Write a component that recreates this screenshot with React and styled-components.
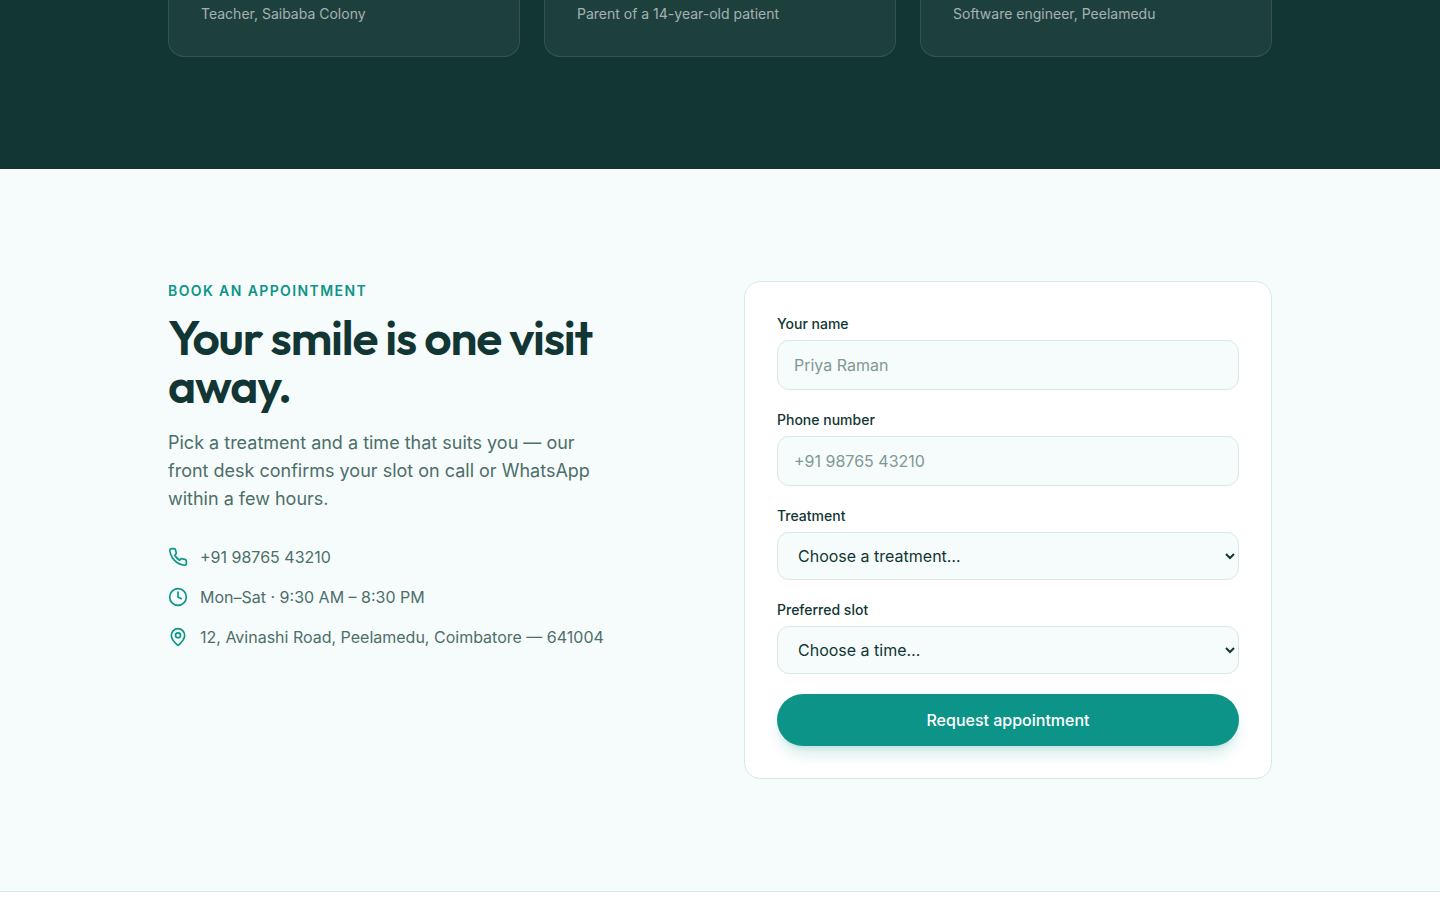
import React from "react";
import styled, { createGlobalStyle } from "styled-components";
import { Clock, MapPin } from "lucide-react";

const ink = "#113633";
const muted = "#4e6e69";
const teal = "#0d9488";
const mist = "#f5fcfb";
const line = "#d6eae6";

const GlobalStyle = createGlobalStyle`
  *, *::before, *::after { box-sizing: border-box; }
  body {
    margin: 0;
    background: #fff;
    color: ${ink};
    font-family: Inter, "Liberation Sans", sans-serif;
    font-size: 16px;
    line-height: 24px;
    -webkit-font-smoothing: antialiased;
  }
  h2, p, ul { margin: 0; padding: 0; }
`;

const Container = styled.div`
  max-width: 1152px;
  margin: 0 auto;
  padding: 0 24px;
`;

const Testimonials = styled.section`
  background: ${ink};
  padding-bottom: 112px;
`;

const CardGrid = styled.div`
  display: grid;
  grid-template-columns: repeat(3, 1fr);
  gap: 24px;
`;

const TestimonialCard = styled.article`
  padding: 4px 32px 32px;
  border: 1px solid rgba(255, 255, 255, 0.1);
  border-top: 0;
  border-radius: 0 0 16px 16px;
  background: rgba(255, 255, 255, 0.05);
`;

const Role = styled.p`
  font-size: 14px;
  line-height: 20px;
  color: rgba(255, 255, 255, 0.6);
`;

const Booking = styled.section`
  background: ${mist};
  padding: 112px 0;
`;

const BookingGrid = styled(Container)`
  display: grid;
  grid-template-columns: 1fr 1fr;
  gap: 48px;
`;

const Eyebrow = styled.p`
  font-size: 14px;
  line-height: 20px;
  font-weight: 600;
  letter-spacing: 0.1em;
  text-transform: uppercase;
  color: ${teal};
`;

const Intro = styled.div`
  max-width: 448px;
`;

const Title = styled.h2`
  margin-top: 12px;
  font-family: Outfit, Lato, sans-serif;
  font-size: 48px;
  line-height: 48px;
  font-weight: 600;
  letter-spacing: -0.025em;
`;

const Lead = styled.p`
  margin-top: 20px;
  font-size: 18px;
  line-height: 28px;
  color: ${muted};
`;

const ContactList = styled.ul`
  display: flex;
  flex-direction: column;
  gap: 16px;
  margin-top: 32px;
  list-style: none;
  color: ${muted};
`;

const ContactItem = styled.li`
  display: flex;
  align-items: center;
  gap: 12px;

  svg {
    flex: none;
    color: ${teal};
  }
`;

const ContactLink = styled.a`
  color: inherit;
  text-decoration: none;
`;

const Form = styled.form`
  display: flex;
  flex-direction: column;
  gap: 20px;
  padding: 32px;
  border: 1px solid ${line};
  border-radius: 16px;
  background: #fff;
`;

const Field = styled.div`
  display: flex;
  flex-direction: column;
  gap: 6px;
`;

const Label = styled.label`
  font-size: 14px;
  line-height: 20px;
  font-weight: 500;
`;

const Input = styled.input`
  width: 100%;
  height: 50px;
  padding: 12px 16px;
  border: 1px solid ${line};
  border-radius: 12px;
  background: ${mist};
  color: ${ink};
  font: inherit;

  &::placeholder {
    color: ${muted};
    opacity: 0.7;
  }
`;

const Select = styled.select`
  width: 100%;
  height: 48px;
  padding: 12px 16px;
  border: 1px solid ${line};
  border-radius: 12px;
  background: ${mist};
  color: ${ink};
  font: inherit;
`;

const SubmitButton = styled.button`
  height: 52px;
  padding: 0 28px;
  border: 0;
  border-radius: 26px;
  background: ${teal};
  box-shadow: 0 10px 15px -3px rgba(13, 148, 136, 0.2), 0 4px 6px -4px rgba(13, 148, 136, 0.2);
  color: #fff;
  font: inherit;
  font-weight: 500;
  cursor: pointer;
`;

const Footer = styled.footer`
  padding: 4px 0;
  border-top: 1px solid ${line};
  background: #fff;
`;

const roles = [
  "Teacher, Saibaba Colony",
  "Parent of a 14-year-old patient",
  "Software engineer, Peelamedu",
];

function PhoneIcon() {
  return (
    <svg
      width="20"
      height="20"
      viewBox="0 0 24 24"
      fill="none"
      stroke="currentColor"
      strokeWidth="2"
      strokeLinecap="round"
      strokeLinejoin="round"
      aria-hidden="true"
    >
      <path d="M22 16.92v3a2 2 0 0 1-2.18 2 19.79 19.79 0 0 1-8.63-3.07 19.5 19.5 0 0 1-6-6 19.79 19.79 0 0 1-3.07-8.67A2 2 0 0 1 4.11 2h3a2 2 0 0 1 2 1.72 12.84 12.84 0 0 0 .7 2.81 2 2 0 0 1-.45 2.11L8.09 9.91a16 16 0 0 0 6 6l1.27-1.27a2 2 0 0 1 2.11-.45 12.84 12.84 0 0 0 2.81.7A2 2 0 0 1 22 16.92z" />
    </svg>
  );
}

export default function App() {
  return (
    <>
      <GlobalStyle />
      <Testimonials>
        <Container>
          <CardGrid>
            {roles.map((role) => (
              <TestimonialCard key={role}>
                <Role>{role}</Role>
              </TestimonialCard>
            ))}
          </CardGrid>
        </Container>
      </Testimonials>
      <Booking>
        <BookingGrid>
          <Intro>
            <Eyebrow>Book an appointment</Eyebrow>
            <Title>Your smile is one visit away.</Title>
            <Lead>
              Pick a treatment and a time that suits you — our front desk confirms your slot on
              call or WhatsApp within a few hours.
            </Lead>
            <ContactList>
              <ContactItem>
                <PhoneIcon />
                <ContactLink href="tel:+919876543210">+91 98765 43210</ContactLink>
              </ContactItem>
              <ContactItem>
                <Clock size={20} aria-hidden="true" />
                <span>Mon–Sat · 9:30 AM – 8:30 PM</span>
              </ContactItem>
              <ContactItem>
                <MapPin size={20} aria-hidden="true" />
                <span>12, Avinashi Road, Peelamedu, Coimbatore — 641004</span>
              </ContactItem>
            </ContactList>
          </Intro>
          <Form onSubmit={(event) => event.preventDefault()}>
            <Field>
              <Label htmlFor="name">Your name</Label>
              <Input id="name" type="text" placeholder="Priya Raman" />
            </Field>
            <Field>
              <Label htmlFor="phone">Phone number</Label>
              <Input id="phone" type="tel" placeholder="+91 98765 43210" />
            </Field>
            <Field>
              <Label htmlFor="treatment">Treatment</Label>
              <Select id="treatment" defaultValue="">
                <option value="">Choose a treatment…</option>
              </Select>
            </Field>
            <Field>
              <Label htmlFor="slot">Preferred slot</Label>
              <Select id="slot" defaultValue="">
                <option value="">Choose a time…</option>
              </Select>
            </Field>
            <SubmitButton type="submit">Request appointment</SubmitButton>
          </Form>
        </BookingGrid>
      </Booking>
      <Footer />
    </>
  );
}
